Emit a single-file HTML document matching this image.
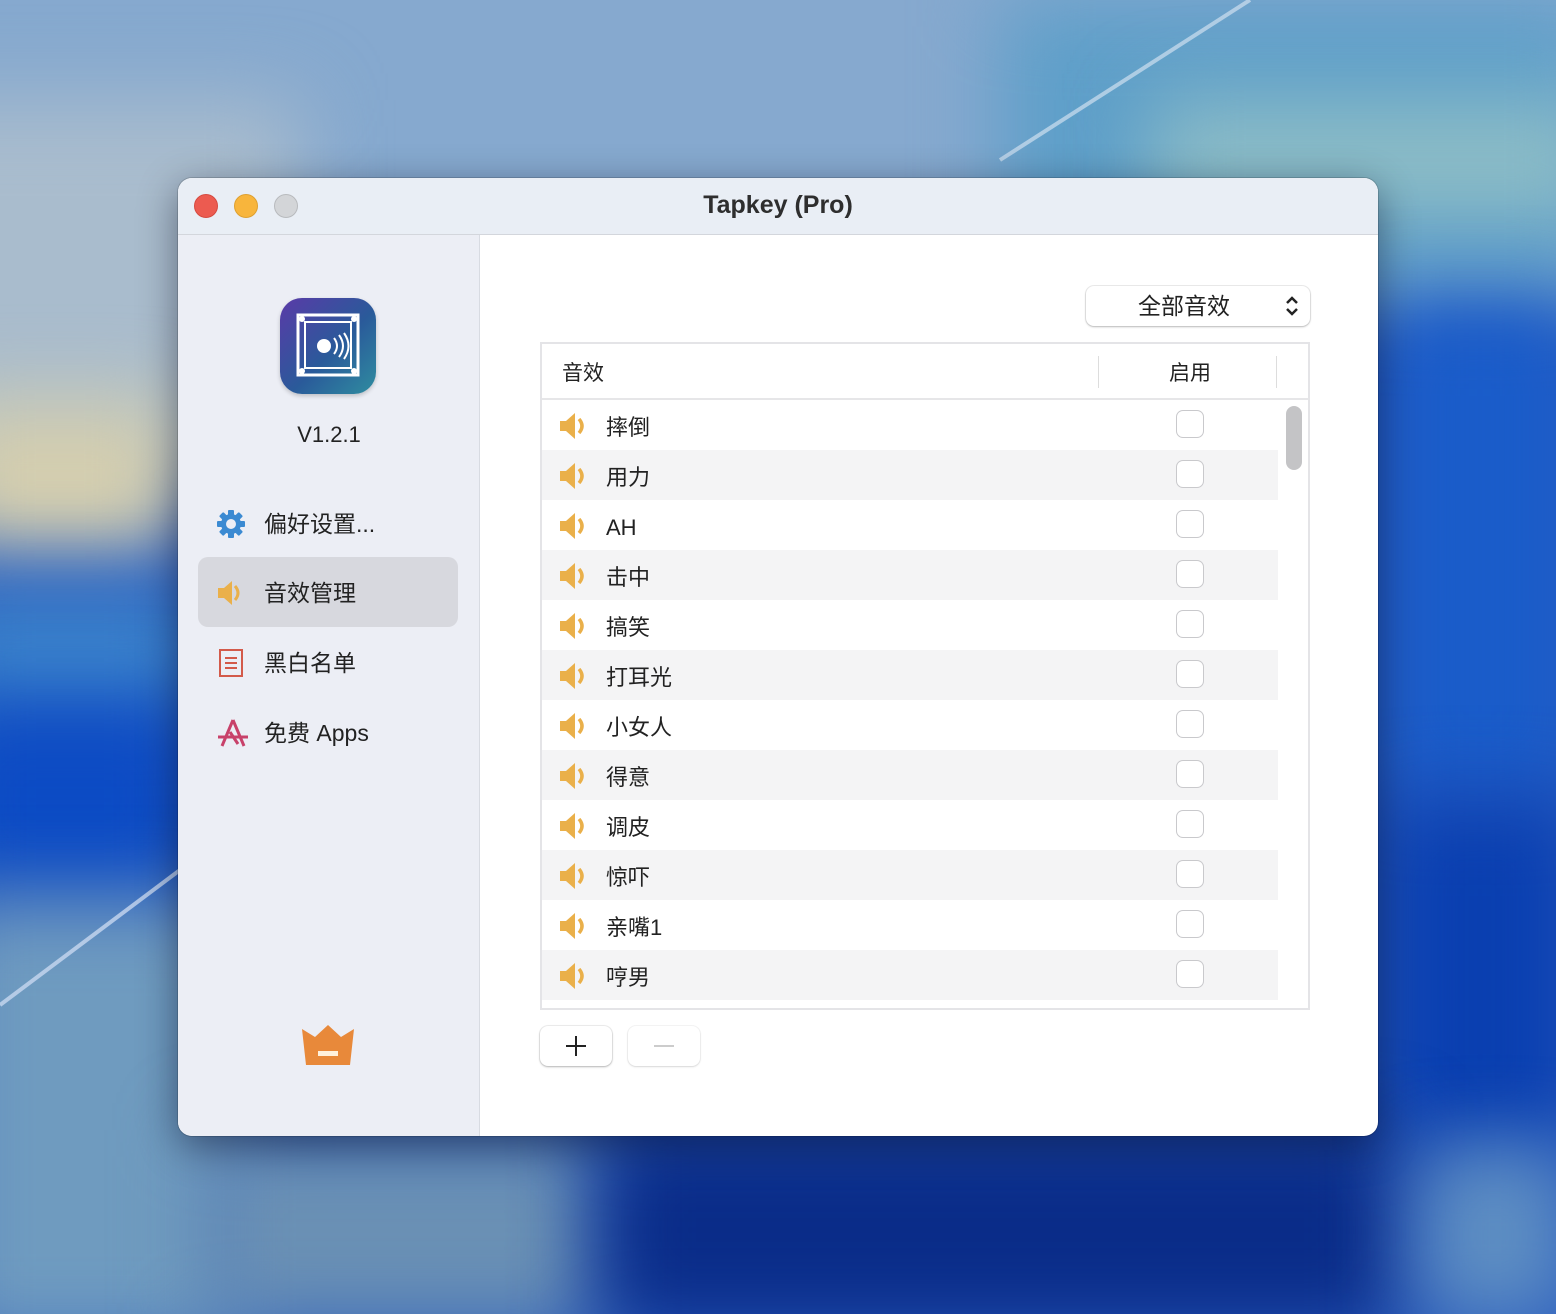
<!DOCTYPE html>
<html><head><meta charset="utf-8"><style>
*{margin:0;padding:0;box-sizing:border-box}
html,body{width:1556px;height:1314px;overflow:hidden}
body{position:relative;font-family:"Liberation Sans","Noto Sans CJK SC",sans-serif;color:#222;background:#2a5cc0}
.bg{position:absolute;left:0;top:0;width:1556px;height:1314px;overflow:hidden}
.b{position:absolute;filter:blur(40px)}
.win{position:absolute;left:178px;top:178px;width:1200px;height:958px;border-radius:14px;overflow:hidden;background:#fff;box-shadow:0 10px 40px rgba(0,0,20,.45),0 0 0 1px rgba(0,0,0,.15)}
.title{position:absolute;left:0;top:0;width:1200px;height:57px;background:#e9eef5;border-bottom:1px solid #d3d6dc;text-align:center;font-size:25px;font-weight:bold;line-height:55px;color:#2e2e2e}
.dot{position:absolute;top:16px;width:24px;height:24px;border-radius:50%}
.side{position:absolute;left:0;top:57px;width:302px;height:901px;background:#eceef5;border-right:1px solid #d8dbe2}
.nav{position:absolute;left:20px;width:260px;height:70px;border-radius:10px;font-size:23px;line-height:72px;padding-left:66px}
.nav svg{position:absolute;left:18px;top:21px}
.tbl{position:absolute;left:362px;top:164px;width:770px;height:668px;border:2px solid #e4e4e7;overflow:hidden;background:#fff}
.hd{height:56px;border-bottom:2px solid #e6e6e8;position:relative;font-size:21px;line-height:60px}
.row{position:absolute;left:0;width:736px;height:50px;font-size:22px;line-height:56px;padding-left:64px}
.row.g{background:#f4f4f5}
.row svg{position:absolute;left:16px;top:11px}
.cb{position:absolute;left:634px;top:10px;width:28px;height:28px;border:1.5px solid #c9c9cc;border-radius:7px;background:#fff}
.btn{position:absolute;top:848px;width:72px;height:40px;border-radius:8px;background:#fff;box-shadow:0 1px 2px rgba(0,0,0,.25),0 0 0 1px rgba(0,0,0,.06)}
</style></head><body>
<div class="bg">
<div class="b" style="left:-100px;top:-100px;width:1800px;height:400px;background:#86a9cf"></div>
<div class="b" style="left:-100px;top:100px;width:400px;height:400px;background:#a9bccd"></div>
<div class="b" style="left:-60px;top:400px;width:240px;height:150px;background:#d6cfae"></div>
<div class="b" style="left:-60px;top:600px;width:260px;height:120px;background:#3d86cc"></div>
<div class="b" style="left:-60px;top:700px;width:260px;height:200px;background:#0c4bc4"></div>
<div class="b" style="left:-60px;top:900px;width:300px;height:450px;background:#6f9bbf"></div>
<div class="b" style="left:1000px;top:0px;width:600px;height:300px;background:#5e9fc9"></div>
<div class="b" style="left:1150px;top:100px;width:450px;height:120px;background:#8cbcc6"></div>
<div class="b" style="left:1380px;top:300px;width:200px;height:500px;background:#1a5cc9"></div>
<div class="b" style="left:1380px;top:800px;width:200px;height:350px;background:#0a3fb0"></div>
<div class="b" style="left:200px;top:1130px;width:400px;height:200px;background:#6a90b4"></div>
<div class="b" style="left:600px;top:1130px;width:800px;height:200px;background:#0a2c88"></div>
<div class="b" style="left:1420px;top:1150px;width:150px;height:170px;background:#5f8fc2"></div>
<svg style="position:absolute;left:0;top:0" width="1556" height="1314"><path d="M0 1005 L180 870" stroke="#c8d8f0" stroke-width="4" opacity=".8"/><path d="M1000 160 L1250 0" stroke="#cfe0f0" stroke-width="4" opacity=".7"/></svg>
</div>

<div class="win">
<div class="title">Tapkey (Pro)
<div class="dot" style="left:16px;background:#ec5b50;border:1px solid #d54a40"></div>
<div class="dot" style="left:56px;background:#f8b53c;border:1px solid #dea030"></div>
<div class="dot" style="left:96px;background:#d3d5d8;border:1px solid #b8babd"></div>
</div>
<div class="side">
<div style="position:absolute;left:102px;top:63px;width:96px;height:96px;border-radius:22px;background:linear-gradient(135deg,#5a3aa8,#2a5a9a 55%,#2f8da0);box-shadow:0 2px 4px rgba(0,0,0,.2)">
<svg width="96" height="96"><rect x="18" y="17" width="60" height="60" fill="none" stroke="#fff" stroke-width="3"/><rect x="25" y="24" width="46" height="46" fill="none" stroke="#fff" stroke-width="2"/><circle cx="22" cy="21" r="3" fill="#fff"/><circle cx="74" cy="21" r="3" fill="#fff"/><circle cx="22" cy="73" r="3" fill="#fff"/><circle cx="74" cy="73" r="3" fill="#fff"/><circle cx="44" cy="48" r="7" fill="#fff"/><path d="M54 40 q6 8 0 16 M59 37 q8 11 0 22 M64 35 q9 13 0 26" stroke="#fff" stroke-width="2" fill="none"/></svg></div>
<div style="position:absolute;left:0;width:302px;top:187px;text-align:center;font-size:22px">V1.2.1</div>
<div class="nav" style="top:253px"><svg width="30" height="30" viewBox="0 0 30 30"><g fill="#3b8ad2"><circle cx="15" cy="15" r="10"/><g><rect x="12" y="1" width="6" height="28" rx="1"/><rect x="12" y="1" width="6" height="28" rx="1" transform="rotate(45 15 15)"/><rect x="12" y="1" width="6" height="28" rx="1" transform="rotate(90 15 15)"/><rect x="12" y="1" width="6" height="28" rx="1" transform="rotate(135 15 15)"/></g></g><circle cx="15" cy="15" r="5" fill="#eceef5"/></svg>偏好设置...</div>
<div class="nav" style="top:322px;background:#d7d8de"><svg width="30" height="30" viewBox="0 0 30 30"><path d="M2 10h6l8-7v24l-8-7H2z" fill="#eab04a"/><path d="M19 8q6 7 0 14" stroke="#eab04a" stroke-width="3" fill="none"/></svg>音效管理</div>
<div class="nav" style="top:392px"><svg width="30" height="30" viewBox="0 0 30 30"><rect x="4" y="2" width="22" height="26" fill="none" stroke="#d35a4a" stroke-width="2"/><path d="M9 10h12M9 15h12M9 20h12" stroke="#d35a4a" stroke-width="2"/></svg>黑白名单</div>
<div class="nav" style="top:462px"><svg width="34" height="30" viewBox="0 0 34 30"><path d="M17 2 L6 28 M17 2 L28 28 M2 19 H32 M14 14 L22 26" stroke="#c8416a" stroke-width="3" fill="none"/></svg>免费 Apps</div>
<svg style="position:absolute;left:122px;top:788px" width="56" height="44" viewBox="0 0 56 44"><path d="M2 6 L15 14 L28 2 L41 14 L54 6 L50 42 H6 Z" fill="#e8893a"/><rect x="18" y="28" width="20" height="5" fill="#fff1dc"/></svg>
</div>
<div style="position:absolute;left:908px;top:108px;width:224px;height:40px;border-radius:8px;background:#fff;box-shadow:0 1px 2px rgba(0,0,0,.22),0 0 0 1px rgba(0,0,0,.07);font-size:23px;line-height:40px;padding-left:52px">全部音效<svg style="position:absolute;right:10px;top:8px" width="16" height="24"><path d="M3 9l5-5 5 5M3 15l5 5 5-5" stroke="#222" stroke-width="2.5" fill="none"/></svg></div>
<div class="tbl">
<div class="hd"><span style="padding-left:20px">音效</span><div style="position:absolute;left:556px;top:12px;width:1px;height:32px;background:#ddd"></div><span style="position:absolute;left:627px">启用</span><div style="position:absolute;left:734px;top:12px;width:1px;height:32px;background:#ddd"></div></div>
<div id="rows"></div>
<div style="position:absolute;left:744px;top:62px;width:16px;height:64px;border-radius:8px;background:#c4c4c6"></div>
</div>
<div class="btn" style="left:362px"><svg width="72" height="40"><path d="M36 10v20M26 20h20" stroke="#222" stroke-width="2"/></svg></div>
<div class="btn" style="left:450px;box-shadow:0 1px 2px rgba(0,0,0,.12),0 0 0 1px rgba(0,0,0,.04)"><svg width="72" height="40"><path d="M26 20h20" stroke="#ccc" stroke-width="2"/></svg></div>
</div>
<script>
var n=["摔倒","用力","AH","击中","搞笑","打耳光","小女人","得意","调皮","惊吓","亲嘴1","哼男",""];
var s='';for(var i=0;i<n.length;i++){s+='<div class="row'+(i%2?' g':'')+'" style="top:'+(56+i*50)+'px"><svg width="32" height="30" viewBox="0 0 32 30"><path d="M2 10h6l9-8v26l-9-8H2z" fill="#eab04a"/><path d="M21 8q6 7 0 14" stroke="#eab04a" stroke-width="3.5" fill="none"/></svg>'+n[i]+'<div class="cb"></div></div>';}
document.getElementById('rows').innerHTML=s;
</script>
</body></html>
